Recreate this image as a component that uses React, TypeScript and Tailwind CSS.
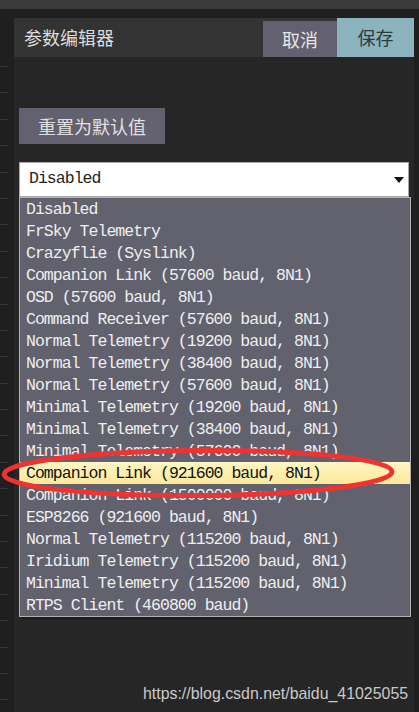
import React from 'react';

const options = [
  'Disabled',
  'FrSky Telemetry',
  'Crazyflie (Syslink)',
  'Companion Link (57600 baud, 8N1)',
  'OSD (57600 baud, 8N1)',
  'Command Receiver (57600 baud, 8N1)',
  'Normal Telemetry (19200 baud, 8N1)',
  'Normal Telemetry (38400 baud, 8N1)',
  'Normal Telemetry (57600 baud, 8N1)',
  'Minimal Telemetry (19200 baud, 8N1)',
  'Minimal Telemetry (38400 baud, 8N1)',
  'Minimal Telemetry (57600 baud, 8N1)',
  'Companion Link (921600 baud, 8N1)',
  'Companion Link (1500000 baud, 8N1)',
  'ESP8266 (921600 baud, 8N1)',
  'Normal Telemetry (115200 baud, 8N1)',
  'Iridium Telemetry (115200 baud, 8N1)',
  'Minimal Telemetry (115200 baud, 8N1)',
  'RTPS Client (460800 baud)',
];

const HIGHLIGHT = 12;
const cjk = "font-['Noto_Sans_CJK_SC',sans-serif]";
const mono = "font-['Liberation_Mono','Noto_Sans_CJK_SC',monospace] text-[16.5px] tracking-[-0.97px]";

export default function App() {
  return (
    <div className="relative w-[419px] h-[712px] overflow-hidden bg-[#1f1f1f] flex flex-col">
      {/* top strip */}
      <div className="h-[9px] bg-[#3b3b3b] shrink-0" />

      <div className="flex flex-1 min-h-0">
        {/* left gutter with row separators */}
        <div className="w-[14px] shrink-0 pt-[57px] flex flex-col">
          {Array.from({ length: 25 }).map((_, i) => (
            <div key={i} className="h-[26.4px] w-[8px] border-t border-[#363636] shrink-0" />
          ))}
        </div>

        {/* editor panel */}
        <div className="w-[400px] mt-[9px] bg-[#262626] flex flex-col">
          {/* header */}
          <div className="h-[39px] bg-[#333333] flex items-end justify-between">
            <span className={`${cjk} self-center pl-[10px] text-[18px] text-[#dcdcdc]`}>参数编辑器</span>
            <div className="flex items-end">
              <button className={`${cjk} w-[74px] h-[36px] bg-[#63616f] text-[18px] text-[#e6e6e6]`}>取消</button>
              <button className={`${cjk} w-[77px] h-[39px] bg-[#8bb4bf] text-[18px] text-[#2e3a3e]`}>保存</button>
            </div>
          </div>

          <div className="px-[5px] flex flex-col items-start">
            <button className={`${cjk} mt-[51px] w-[146px] h-[36px] bg-[#63616f] text-[18px] text-[#e0e0e0]`}>重置为默认值</button>

            {/* select with open dropdown */}
            <div className="relative mt-[18px] w-[390px]">
              <div className="h-[35px] bg-white border border-[#a9a9a9] flex items-center justify-between pl-[9px] pr-[4px]">
                <span className={`${mono} text-[#222]`}>Disabled</span>
                <svg width="10" height="6" viewBox="0 0 10 6"><path d="M0 0h10L5 6z" fill="#111" /></svg>
              </div>
              <div className="absolute left-0 top-full w-[392px] bg-[#62616e] border border-[#b4b4b4] shadow-[2px_2px_2px_rgba(0,0,0,0.35)] flex flex-col">
                {options.map((o, i) => (
                  <div
                    key={o}
                    className={`${mono} h-[22px] leading-[23px] pl-[6px] whitespace-pre ${
                      i === HIGHLIGHT ? 'bg-gradient-to-b from-[#fff6c4] to-[#fde898] text-[#111]' : 'text-[#efefef]'
                    }`}
                  >
                    {o}
                  </div>
                ))}
              </div>
            </div>
          </div>
        </div>

        <div className="flex-1" />
      </div>

      {/* hand-drawn annotation */}
      <svg className="absolute left-0 top-[446px]" width="400" height="56" viewBox="0 0 400 56">
        <ellipse cx="198" cy="27" rx="194" ry="22.5" fill="none" stroke="#ee3333" strokeWidth="5" transform="rotate(-0.4 198 27)" />
      </svg>

      {/* watermark */}
      <span className="absolute left-[143px] top-[682px] font-['Liberation_Sans',sans-serif] text-[15.9px] text-[#c9c9c9]">
        https://blog.csdn.net/baidu_41025055
      </span>
    </div>
  );
}
